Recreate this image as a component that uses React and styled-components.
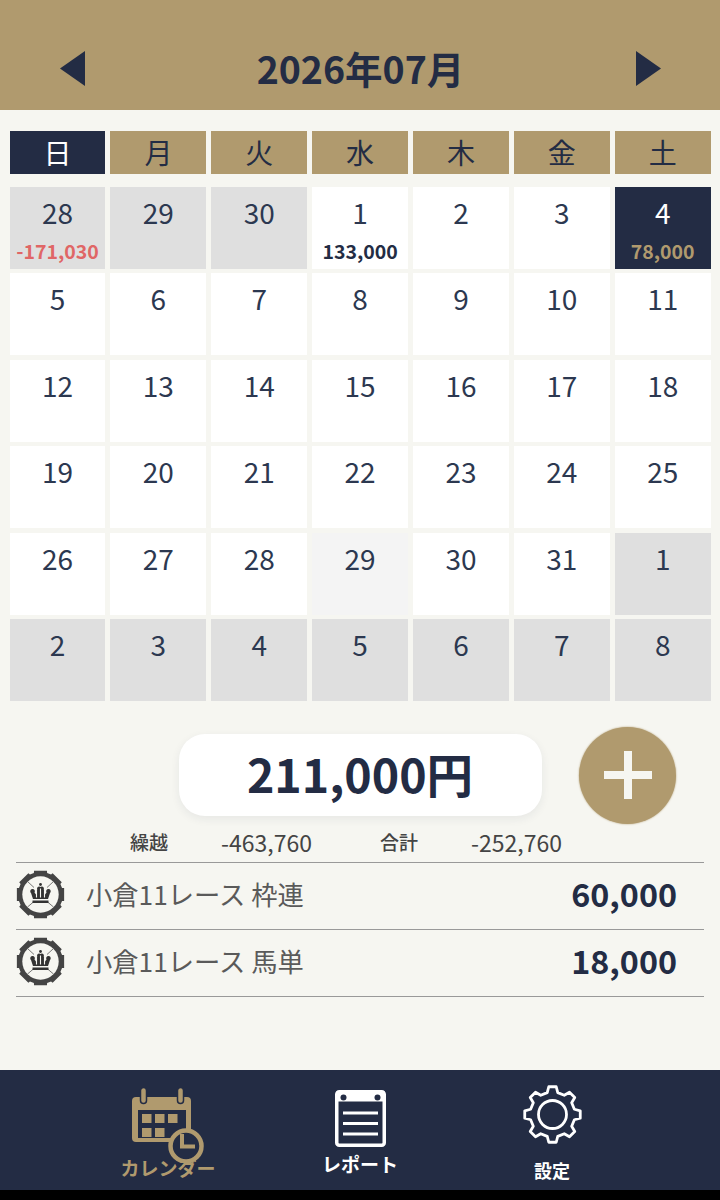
import React from 'react';
import styled, { createGlobalStyle } from 'styled-components';

const navy = '#232c44';
const gold = '#b09a6e';
const paper = '#f6f6f1';
const jp = '"Noto Sans CJK JP", "Noto Sans", sans-serif';

const weekdays = ['日', '月', '火', '水', '木', '金', '土'];

const days = [
    { n: 28, kind: 'muted', amount: '-171,030', tone: 'loss' },
    { n: 29, kind: 'muted' },
    { n: 30, kind: 'muted' },
    { n: 1, amount: '133,000', tone: 'gain' },
    { n: 2 },
    { n: 3 },
    { n: 4, kind: 'selected', amount: '78,000', tone: 'gold' },
    ...[5, 6, 7, 8, 9, 10, 11, 12, 13, 14, 15, 16, 17, 18, 19, 20, 21, 22, 23, 24, 25, 26, 27, 28].map(n => ({ n })),
    { n: 29, kind: 'today' },
    { n: 30 },
    { n: 31 },
    ...[1, 2, 3, 4, 5, 6, 7, 8].map(n => ({ n, kind: 'muted' })),
];

const bets = [
    { name: '小倉11レース 枠連', amount: '60,000' },
    { name: '小倉11レース 馬単', amount: '18,000' },
];

// toothed outline shared by the settings icon and the race chip
const gearPath = (cx, cy, outer, inner, teeth, top, base) => {
    const step = (Math.PI * 2) / teeth;
    const pts = [];
    for (let i = 0; i < teeth; i++) {
        const a = i * step - Math.PI / 2;
        const at = (r, o) => `${(cx + Math.cos(a + o * step) * r).toFixed(2)} ${(cy + Math.sin(a + o * step) * r).toFixed(2)}`;
        pts.push(at(inner, -base), at(outer, -top), at(outer, top), at(inner, base));
    }
    return 'M' + pts.join('L') + 'Z';
};

const Triangle = ({ dir }) => (
    <svg width="25" height="35" viewBox="0 0 25 35">
        <path d={dir === 'left' ? 'M25 0V35L0 17.5Z' : 'M0 0V35L25 17.5Z'} fill={navy} />
    </svg>
);

const ChipIcon = () => (
    <svg width="49" height="49" viewBox="0 0 49 49">
        <path d={gearPath(24.5, 24.5, 24.5, 22.5, 8, 0.34, 0.38)} fill="#444" />
        <circle cx="24.5" cy="24.5" r="18.2" fill={paper} />
        <path d="M11.5 11.5L18 17.5M37.5 11.5L31 17.5M11.5 37L18 31.5M37.5 37L31 31.5" stroke="#555" strokeWidth="0.8" />
        <circle cx="24.5" cy="14.5" r="1.4" fill="#333" />
        <path d="M16.5 19c-2 0-3 2.5-1.5 4l2 6h15l2-6c1.5-1.5.5-4-1.5-4s-3 2-2 3.500l-1.500 2-1.200-5c.5-1.500-.3-3-2-3-.6 0-1 .2-1.300.5-.3-.3-.7-.5-1.300-.5-1.700 0-2.500 1.500-2 3l-1.200 5-1.500-2c1-1.500 0-3.500-2-3.500Z" fill="#333" />
        <path d="M20.5 20.5v7M24.5 18.5v9M28.5 20.5v7" stroke={paper} strokeWidth="1.1" />
        <path d="M16.5 30.5h16v2.5h-16Z" fill="#333" />
    </svg>
);

const CalendarIcon = () => (
    <svg width="73" height="76" viewBox="0 0 73 76">
        <rect x="0" y="10" width="59" height="45" rx="4" fill={gold} />
        <rect x="6" y="23" width="48" height="28" fill={navy} />
        {[10, 23, 36].map(x => <rect key={x} x={x} y="27" width="9.5" height="9" fill={gold} />)}
        {[10, 23].map(x => <rect key={x} x={x} y="41" width="9.5" height="9" fill={gold} />)}
        {[10, 47].map(x => (
            <rect key={x} x={x - 1.5} y="0.5" width="6" height="16" rx="3" fill={gold} stroke={navy} strokeWidth="1.5" />
        ))}
        <circle cx="54" cy="59" r="15.5" fill={navy} stroke={gold} strokeWidth="4.5" />
        <path d="M50 47V59.5H63" fill="none" stroke={gold} strokeWidth="4" />
    </svg>
);

const ReportIcon = () => (
    <svg width="51" height="57" viewBox="0 0 51 57">
        <rect x="1.75" y="1.75" width="47.5" height="53.5" rx="2.5" fill={navy} stroke="#fff" strokeWidth="3.5" />
        <rect x="1.5" y="1.5" width="48" height="10" fill="#fff" />
        <circle cx="8.5" cy="7.5" r="3" fill={navy} />
        <circle cx="42.5" cy="7.5" r="3" fill={navy} />
        <path d="M8 23H43M8 33.5H43M8 44H43" stroke="#fff" strokeWidth="3" />
    </svg>
);

const GearIcon = () => (
    <svg width="61" height="61" viewBox="0 0 61 61">
        <path d={gearPath(30.5, 29.5, 28, 22.5, 8, 0.17, 0.3)} fill="none" stroke="#fff" strokeWidth="2.8" strokeLinejoin="round" />
        <circle cx="30.5" cy="29.5" r="14" fill="none" stroke="#fff" strokeWidth="2.8" />
    </svg>
);

const GlobalStyle = createGlobalStyle`
    html, body {
        margin: 0;
        padding: 0;
    }

    body {
        background: ${paper};
        font-family: ${jp};
    }
`;

const Screen = styled.div`
    position: relative;
    width: 720px;
    height: 1200px;
    display: flex;
    flex-direction: column;
    overflow: hidden;
    background: ${paper};
`;

const Header = styled.header`
    height: 110px;
    flex: none;
    box-sizing: border-box;
    padding: 51px 59px 0 60px;
    display: flex;
    justify-content: space-between;
    align-items: flex-start;
    background: ${gold};
`;

const Title = styled.h1`
    margin: -12px 0 0;
    font-size: 37.5px;
    line-height: 58px;
    font-weight: 700;
    color: ${navy};
`;

const Calendar = styled.section`
    flex: none;
    padding: 21px 9.4px 0 9.6px;
`;

const WeekRow = styled.div`
    display: grid;
    grid-template-columns: repeat(7, 1fr);
    column-gap: 5px;
`;

const Weekday = styled.div`
    height: 43px;
    line-height: 43px;
    text-align: center;
    font-size: 28px;
    color: ${p => (p.$sunday ? '#fff' : navy)};
    background: ${p => (p.$sunday ? navy : gold)};
`;

const DayGrid = styled.div`
    display: grid;
    grid-template-columns: repeat(7, 1fr);
    grid-auto-rows: 82px;
    column-gap: 5px;
    row-gap: 4.4px;
    margin-top: 13px;
`;

const dayBg = { muted: '#dfdfdf', selected: navy, today: '#f4f4f4' };

const Day = styled.div`
    box-sizing: border-box;
    padding-top: 8px;
    text-align: center;
    background: ${p => dayBg[p.$kind] || '#fff'};
`;

const DayNumber = styled.div`
    font-size: 28px;
    line-height: 34px;
    color: ${p => (p.$kind === 'selected' ? '#fff' : '#2c3850')};
`;

const toneColor = { loss: '#e06666', gain: navy, gold };

const DayAmount = styled.div`
    margin-top: 10px;
    font-size: 19.5px;
    line-height: 24px;
    font-weight: 700;
    color: ${p => toneColor[p.$tone]};
`;

const TotalRow = styled.div`
    position: relative;
    flex: none;
    margin-top: 33px;
    height: 82px;
    display: flex;
    justify-content: center;
`;

const TotalBox = styled.div`
    width: 363px;
    height: 78px;
    padding-bottom: 4px;
    border-radius: 26px;
    background: #fff;
    box-shadow: 0 3px 10px rgba(35, 44, 68, 0.07);
    text-align: center;
    font-size: 46.5px;
    line-height: 78px;
    font-weight: 700;
    color: ${navy};
`;

const AddButton = styled.div`
    position: absolute;
    left: 579px;
    top: -7px;
    width: 97px;
    height: 97px;
    border-radius: 50%;
    background: ${gold};
    box-shadow: 0 0 2px ${gold};
    display: flex;
    align-items: center;
    justify-content: center;
`;

const Stats = styled.div`
    flex: none;
    margin: 10px 0 4px;
    padding-left: 130px;
    display: flex;
    height: 32px;
    align-items: center;
    color: #444;
`;

const StatLabel = styled.span`
    width: ${p => p.$w}px;
    font-size: 19px;
    font-weight: 500;
`;

const StatValue = styled.span`
    width: ${p => p.$w}px;
    font-size: 23px;
    flex: none;
`;

const BetList = styled.ul`
    flex: none;
    list-style: none;
    margin: 0 16px;
    padding: 0;
    border-top: 1px solid #999;
`;

const BetRow = styled.li`
    height: 64px;
    display: flex;
    align-items: center;
    padding: 0 27px 2px 0;
    border-bottom: 1px solid #999;
`;

const BetName = styled.span`
    flex: 1;
    margin: -2px 0 0 21px;
    font-size: 26.3px;
    color: #5a5a5a;
`;

const BetAmount = styled.span`
    margin-top: -4px;
    font-size: 32.3px;
    font-weight: 700;
    color: ${navy};
`;

const Nav = styled.nav`
    margin-top: auto;
    flex: none;
    height: 120px;
    margin-bottom: 10px;
    padding: 0 72px;
    display: grid;
    grid-template-columns: repeat(3, 192px);
    background: ${navy};
`;

const NavItem = styled.div`
    display: flex;
    flex-direction: column;
    align-items: center;
    padding-top: ${p => p.$top}px;
    color: ${p => (p.$active ? gold : '#fff')};

    svg {
        display: block;
    }
`;

const NavLabel = styled.span`
    margin-top: ${p => p.$gap}px;
    font-size: ${p => p.$size}px;
    line-height: 24px;
    font-weight: 700;
    white-space: nowrap;
`;

const BottomEdge = styled.div`
    position: absolute;
    left: 0;
    top: 1190px;
    width: 720px;
    height: 10px;
    background: #000;
`;

export default function App() {
    return (
        <Screen>
            <GlobalStyle />
            <Header>
                <Triangle dir="left" />
                <Title>2026年07月</Title>
                <Triangle dir="right" />
            </Header>
            <Calendar>
                <WeekRow>
                    {weekdays.map((d, i) => (
                        <Weekday key={d} $sunday={i === 0}>{d}</Weekday>
                    ))}
                </WeekRow>
                <DayGrid>
                    {days.map((d, i) => (
                        <Day key={i} $kind={d.kind}>
                            <DayNumber $kind={d.kind}>{d.n}</DayNumber>
                            {d.amount && <DayAmount $tone={d.tone}>{d.amount}</DayAmount>}
                        </Day>
                    ))}
                </DayGrid>
            </Calendar>
            <TotalRow>
                <TotalBox>211,000円</TotalBox>
                <AddButton>
                    <svg width="48" height="48" viewBox="0 0 48 48">
                        <path d="M24 0V48M0 24H48" stroke={paper} strokeWidth="8" />
                    </svg>
                </AddButton>
            </TotalRow>
            <Stats>
                <StatLabel $w={91}>繰越</StatLabel>
                <StatValue $w={159}>-463,760</StatValue>
                <StatLabel $w={91}>合計</StatLabel>
                <StatValue $w={100}>-252,760</StatValue>
            </Stats>
            <BetList>
                {bets.map(b => (
                    <BetRow key={b.name}>
                        <ChipIcon />
                        <BetName>{b.name}</BetName>
                        <BetAmount>{b.amount}</BetAmount>
                    </BetRow>
                ))}
            </BetList>
            <Nav>
                <NavItem $active $top={17}>
                    <CalendarIcon />
                    <NavLabel $size={19} $gap={-7}>カレンダー</NavLabel>
                </NavItem>
                <NavItem $top={20}>
                    <ReportIcon />
                    <NavLabel $size={19} $gap={5}>レポート</NavLabel>
                </NavItem>
                <NavItem $top={15}>
                    <GearIcon />
                    <NavLabel $size={18} $gap={12}>設定</NavLabel>
                </NavItem>
            </Nav>
            <BottomEdge />
        </Screen>
    );
}
